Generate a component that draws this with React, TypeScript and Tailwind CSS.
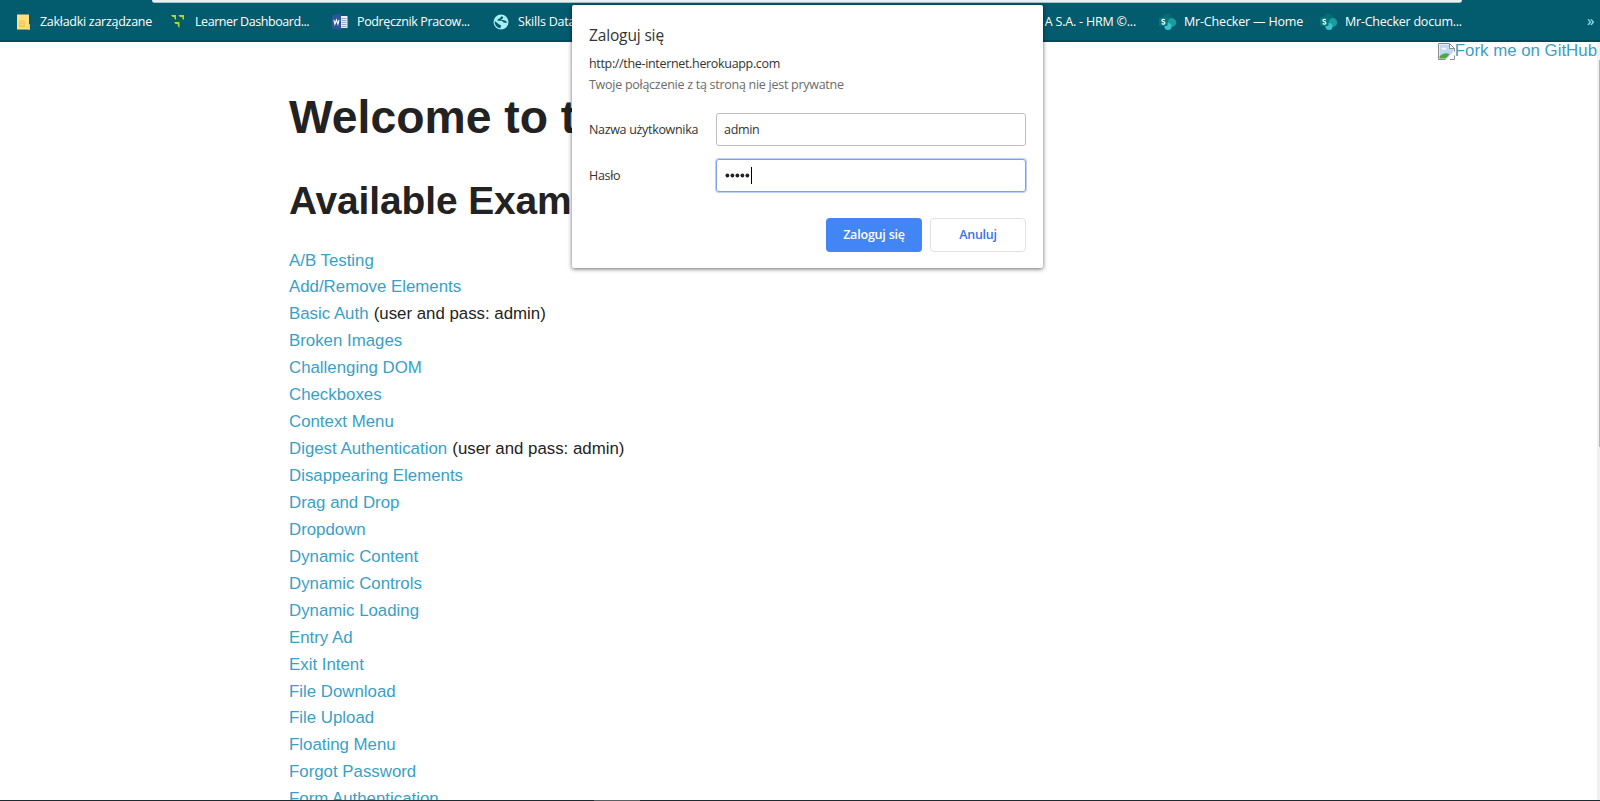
import type { ReactNode } from "react";

const examples: { name: string; note?: string }[] = [
  { name: "A/B Testing" },
  { name: "Add/Remove Elements" },
  { name: "Basic Auth", note: "(user and pass: admin)" },
  { name: "Broken Images" },
  { name: "Challenging DOM" },
  { name: "Checkboxes" },
  { name: "Context Menu" },
  { name: "Digest Authentication", note: "(user and pass: admin)" },
  { name: "Disappearing Elements" },
  { name: "Drag and Drop" },
  { name: "Dropdown" },
  { name: "Dynamic Content" },
  { name: "Dynamic Controls" },
  { name: "Dynamic Loading" },
  { name: "Entry Ad" },
  { name: "Exit Intent" },
  { name: "File Download" },
  { name: "File Upload" },
  { name: "Floating Menu" },
  { name: "Forgot Password" },
  { name: "Form Authentication" },
];

function FolderIcon() {
  return (
    <svg width="14" height="16" viewBox="0 0 14 16" className="shrink-0">
      <path d="M0 .5h12v10h1v5H0z" fill="#ffe27f" />
      <path d="M2 6.500h5.500l.5 1.500v5.500H2z" fill="#f6ca55" />
      <path d="M3 8.500h4M3 10.500h4" stroke="#ffe07c" strokeWidth=".7" />
      <path d="M10.500 10.500H13v5h-2.500z" fill="#f9d465" />
    </svg>
  );
}

function LearnerIcon() {
  return (
    <svg width="14" height="14" viewBox="0 0 14 14" className="shrink-0" fill="#b5d633">
      <path d="M0 0h5v5L3.300 3.500V2H1.500z" />
      <path d="M7.500 0H13v5l-1.700-1.500V2H9z" />
      <path d="M3 7h5.500v6L6.800 11V9H4.500z" />
    </svg>
  );
}

function WordIcon() {
  return (
    <svg width="16" height="16" viewBox="0 0 16 16" className="shrink-0">
      <path d="M8 2h7.500v12H8z" fill="#e9eef8" />
      <path d="M9.500 4.500h5M9.500 6.500h5M9.500 8.500h5M9.500 10.500h5M9.500 12.500h5" stroke="#7c93c7" strokeWidth=".8" />
      <path d="M0 1.500l9-1.500v16l-9-1.500z" fill="#2b579a" />
      <path d="M1.800 5.800l1.100 4.400 1.500-4.200 1.500 4.200 1.100-4.400" stroke="#fff" strokeWidth="1.100" fill="none" />
    </svg>
  );
}

function GlobeIcon() {
  return (
    <svg width="16" height="16" viewBox="0 0 16 16" className="shrink-0">
      <circle cx="8" cy="8" r="7.500" fill="#a5f0f2" />
      <path d="M8.500 2.300C8 3.500 6.800 3.500 6.800 4.600c-1.500 0-2.300.7-2.300 2.200h4.200c.8 0 .8 1.600 2 1.600 1.100 0 1.600.7 3.200.2-.2-1.300-1-2-2.400-2.100-1.500-.1-1.800-.6-3.500-.7 0-.9 2.200-.6 2.200-2.900z" fill="#035b6e" />
      <path d="M1.800 7l4.400 3.400c.6.500 1.800.2 1.800 1.600 0 1-.6 1-.6 2.200C4 14 1.300 10.800 1.800 7z" fill="#035b6e" />
    </svg>
  );
}

function SharePointIcon() {
  return (
    <svg width="18" height="18" viewBox="0 0 18 18" className="shrink-0">
      <circle cx="8.300" cy="5.500" r="5" fill="#036c70" />
      <circle cx="12.800" cy="9.500" r="4.400" fill="#1a9ba1" />
      <circle cx="9" cy="13.500" r="3.500" fill="#37c6d0" />
      <rect x="0" y="4.500" width="8.500" height="8.500" rx=".8" fill="#03787c" />
      <path d="M5.900 6.800C4.700 6 2.800 6.300 2.900 7.500c.1 1.400 3 .9 3 2.400 0 1.300-2 1.500-3.200.7" stroke="#fff" strokeWidth="1.200" fill="none" />
    </svg>
  );
}

function BrokenImageIcon() {
  return (
    <svg width="17" height="17" viewBox="0 0 17 17" className="shrink-0">
      <path d="M.5.500h11l5 5v11H.5z" fill="#fff" />
      <path d="M1.500 1.500h10v4h4v7l-6 3h-8z" fill="#c3d7f4" />
      <path d="M3.500 6.500a1.800 1.800 0 0 1 3-1.600 1.700 1.700 0 0 1 2 1.600z" fill="#fff" />
      <path d="M1.500 15.500v-2c3-3.500 7-4 10-2.500l-3.500 4.500z" fill="#4fa83a" />
      <path d="M16.500 7.500L8 16.500h3l5.500-5z" fill="#fff" />
      <path d="M7.500 16.500H.5V.5h11l5 5v3M11.500.5v5h5M12 16.500h4.500v-4" stroke="#8d8d8d" fill="none" />
    </svg>
  );
}

function PasswordDots() {
  return (
    <svg width="26" height="5" viewBox="0 0 26 5" fill="#222" className="shrink-0">
      {[2, 7, 12, 17, 22].map((x) => (
        <circle key={x} cx={x + 0.4} cy="2.500" r="1.900" />
      ))}
    </svg>
  );
}

function Bookmark({ icon, label, className, text }: { icon: ReactNode; label: string; className: string; text: string }) {
  return (
    <div className={`flex shrink-0 items-center ${className}`}>
      {icon}
      <span className={`whitespace-nowrap ${text}`}>{label}</span>
    </div>
  );
}

function BookmarkBar() {
  return (
    <header className="h-[42px] shrink-0 border-b-2 border-[#034b5b] bg-[#035b6e] text-[12.500px] text-white">
      <div className="mr-[138px] ml-[152px] h-[3px] rounded-b-[8px] border-b border-[#a9c3ca] bg-[#e9f0f2]" />
      <nav className="flex h-[38px] items-center pl-[17px]">
        <Bookmark icon={<FolderIcon />} label="Zakładki zarządzane" className="w-[154px] gap-[9px]" text="tracking-[-0.280px]" />
        <Bookmark icon={<LearnerIcon />} label="Learner Dashboard..." className="w-[161px] gap-[10px]" text="tracking-[-0.440px]" />
        <Bookmark icon={<WordIcon />} label="Podręcznik Pracow..." className="w-[161px] gap-[9px]" text="tracking-[-0.360px]" />
        <Bookmark icon={<GlobeIcon />} label="Skills Data" className="w-[401px] gap-[9px]" text="tracking-[-0.200px]" />
        <div className="mr-[23px] w-[242px] text-right tracking-[-0.200px] whitespace-nowrap">A S.A. - HRM ©...</div>
        <Bookmark icon={<SharePointIcon />} label="Mr-Checker — Home" className="w-[161px] gap-[7px]" text="tracking-[-0.170px]" />
        <Bookmark icon={<SharePointIcon />} label="Mr-Checker docum..." className="w-[267px] gap-[7px]" text="tracking-[-0.220px]" />
        <span className="pb-[3px] text-[15px] text-[#a5f0f2]">»</span>
      </nav>
    </header>
  );
}

function LoginDialog() {
  return (
    <section
      role="dialog"
      className="absolute top-[5px] left-[572px] h-[263px] w-[471px] rounded-[2px] bg-white px-[17px] text-[12.500px] text-[#333] shadow-[0_1px_4px_rgba(0,0,0,0.6)]"
    >
      <h3 className="pt-[19px] text-[15.500px] leading-[22px] tracking-[-0.150px]">Zaloguj się</h3>
      <p className="mt-[8px] leading-[20px] tracking-[-0.330px]">http://the-internet.herokuapp.com</p>
      <p className="leading-[21px] tracking-[-0.270px] text-[#6b6b6b]">Twoje połączenie z tą stroną nie jest prywatne</p>
      <div className="mt-[18px] flex items-center">
        <label className="w-[127px] pt-[2px] tracking-[-0.320px]">Nazwa użytkownika</label>
        <div className="flex h-[33px] w-[310px] items-center rounded-[3px] border border-[#bdbdbd] pt-[2px] pl-[7px] tracking-[-0.300px]">admin</div>
      </div>
      <div className="mt-[13px] flex items-center">
        <label className="w-[127px] pt-[2px] tracking-[-0.320px]">Hasło</label>
        <div className="flex h-[33px] w-[310px] items-center rounded-[3px] border border-[#7da2e3] pl-[8px] shadow-[0_0_0_1px_#b9d0f8]">
          <PasswordDots />
          <i className="h-[17px] w-px bg-black" />
        </div>
      </div>
      <div className="mt-[26px] flex gap-[8px] pl-[237px] font-semibold">
        <button className="h-[34px] w-[96px] shrink-0 rounded-[4px] bg-[#4285f4] pt-px tracking-[-0.200px] text-white">Zaloguj się</button>
        <button className="h-[34px] w-[96px] shrink-0 rounded-[4px] border border-[#dfe1e4] pt-px tracking-[-0.300px] text-[#3873e8]">Anuluj</button>
      </div>
    </section>
  );
}

export default function App() {
  return (
    <div className="relative flex h-[801px] w-[1600px] flex-col overflow-hidden bg-white font-['Open_Sans',sans-serif]">
      <BookmarkBar />
      <main className="flex min-h-0 flex-1 justify-between overflow-hidden font-['Liberation_Sans',Arial,sans-serif] text-[#222]">
        <div className="w-[700px] pl-[289px]">
          <h1 className="pt-[43px] text-[46.300px] leading-[65px] font-bold whitespace-nowrap">Welcome to the-internet</h1>
          <h2 className="mt-[24px] text-[38.900px] leading-[54px] font-bold tracking-[-0.100px] whitespace-nowrap">Available Examples</h2>
          <ul className="mt-[19.500px] text-[16.840px] leading-[26.930px]">
            {examples.map((e) => (
              <li key={e.name} className="whitespace-nowrap">
                <a className="text-[#399fc6]">{e.name}</a>
                {e.note && <span className="ml-[0.500px]">{` ${e.note}`}</span>}
              </li>
            ))}
          </ul>
        </div>
        <div className="flex">
          <a className="flex h-[18px] items-center text-[16.840px] text-[#399fc6]">
            <BrokenImageIcon />
            Fork me on GitHub
          </a>
          <div className="flex w-[3px] justify-end bg-[#f1f1f1] pt-[18px]">
            <div className="h-[387px] w-px bg-[#b5b5b5]" />
          </div>
        </div>
      </main>
      <footer className="flex h-px shrink-0 bg-[#1c2a33]">
        <div className="ml-[594px] w-[46px] bg-[#596064]" />
      </footer>
      <LoginDialog />
    </div>
  );
}
